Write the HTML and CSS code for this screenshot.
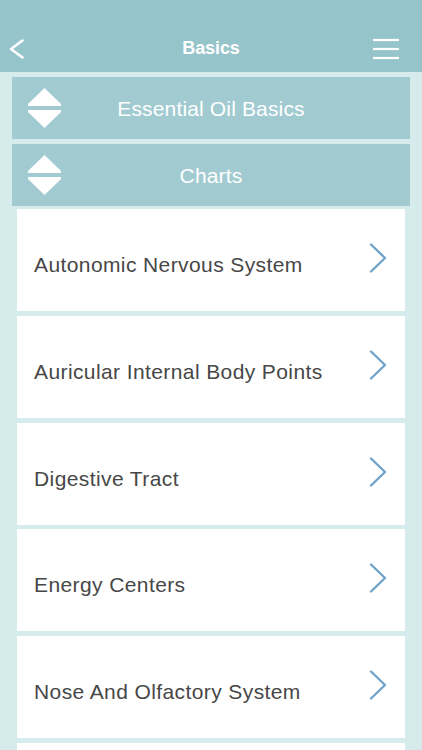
FILE: index.html
```html
<!DOCTYPE html>
<html lang="en">
<head>
<meta charset="utf-8">
<title>Basics</title>
<link rel="stylesheet" href="styles.css">
</head>
<body>
<header class="topbar">
  <div class="nav">
    <span class="nav-btn back">
      <svg width="16" height="20" viewBox="0 0 16 20"><polyline points="13.5,1.5 2,10 13.5,18.5" fill="none" stroke="#fff" stroke-width="2.6" stroke-linecap="round" stroke-linejoin="round"/></svg>
    </span>
    <h1 class="title">Basics</h1>
    <span class="nav-btn menu">
      <svg width="26" height="22" viewBox="0 0 26 22"><g stroke="#fff" stroke-width="2.2"><line x1="0" y1="2" x2="26" y2="2"/><line x1="0" y1="11" x2="26" y2="11"/><line x1="0" y1="20" x2="26" y2="20"/></g></svg>
    </span>
  </div>
</header>
<main class="content">
  <div class="section">
    <svg class="toggle" width="33" height="40" viewBox="0 0 33 40"><polygon points="0,16 16.5,0 33,16 33,18 0,18" fill="#fff"/><polygon points="0,22 33,22 33,24 16.5,40 0,24" fill="#fff"/></svg>
    <span class="section-label">Essential Oil Basics</span>
  </div>
  <div class="section">
    <svg class="toggle" width="33" height="40" viewBox="0 0 33 40"><polygon points="0,16 16.5,0 33,16 33,18 0,18" fill="#fff"/><polygon points="0,22 33,22 33,24 16.5,40 0,24" fill="#fff"/></svg>
    <span class="section-label">Charts</span>
  </div>
  <ul class="list">
    <li class="item"><span class="item-label">Autonomic Nervous System</span><svg class="chev" width="18" height="30" viewBox="0 0 18 30"><polyline points="2,1.5 16,15 2,28.5" fill="none" stroke="#6fa3c9" stroke-width="2.4" stroke-linecap="round" stroke-linejoin="round"/></svg></li>
    <li class="item"><span class="item-label">Auricular Internal Body Points</span><svg class="chev" width="18" height="30" viewBox="0 0 18 30"><polyline points="2,1.5 16,15 2,28.5" fill="none" stroke="#6fa3c9" stroke-width="2.4" stroke-linecap="round" stroke-linejoin="round"/></svg></li>
    <li class="item"><span class="item-label">Digestive Tract</span><svg class="chev" width="18" height="30" viewBox="0 0 18 30"><polyline points="2,1.5 16,15 2,28.5" fill="none" stroke="#6fa3c9" stroke-width="2.4" stroke-linecap="round" stroke-linejoin="round"/></svg></li>
    <li class="item"><span class="item-label">Energy Centers</span><svg class="chev" width="18" height="30" viewBox="0 0 18 30"><polyline points="2,1.5 16,15 2,28.5" fill="none" stroke="#6fa3c9" stroke-width="2.4" stroke-linecap="round" stroke-linejoin="round"/></svg></li>
    <li class="item"><span class="item-label">Nose And Olfactory System</span><svg class="chev" width="18" height="30" viewBox="0 0 18 30"><polyline points="2,1.5 16,15 2,28.5" fill="none" stroke="#6fa3c9" stroke-width="2.4" stroke-linecap="round" stroke-linejoin="round"/></svg></li>
    <li class="item"></li>
  </ul>
</main>
</body>
</html>
```
FILE: styles.css
```css
* { box-sizing: border-box; }
html, body {
  margin: 0;
  padding: 0;
}
body {
  background: #d6ebeb;
  font-family: "Liberation Sans", Arial, sans-serif;
  height: 750px;
  overflow: hidden;
}
.topbar {
  background: #96c4cb;
  height: 72px;
  padding-top: 28px;
}
.nav {
  height: 40px;
  display: grid;
  grid-template-columns: 1fr auto 1fr;
  align-items: center;
  padding: 0 23px;
}
.nav-btn {
  display: flex;
  align-items: center;
}
.nav-btn.back { margin-top: 2px; margin-left: -14px; }
.nav-btn.menu { justify-content: flex-end; margin-top: 2px; }
.title {
  margin: 0;
  color: #fff;
  font-size: 18px;
  font-weight: bold;
  letter-spacing: -0.1px;
  padding-top: 1px;
}
.content {
  padding: 5px 12px 0;
  display: flex;
  flex-direction: column;
}
.section {
  background: #a1cbd1;
  height: 62px;
  margin-bottom: 5px;
  display: flex;
  align-items: center;
  position: relative;
  justify-content: center;
}
.toggle {
  position: absolute;
  left: 16px;
  top: 11px;
}
.section-label {
  color: #fff;
  font-size: 21px;
  letter-spacing: 0.15px;
  padding-top: 1px;
}
.list {
  list-style: none;
  margin: -2px 5px 0;
  padding: 0;
  display: flex;
  flex-direction: column;
  gap: 4.8px;
}
.item {
  background: #fff;
  height: 102px;
  flex: none;
  display: flex;
  align-items: center;
  justify-content: space-between;
  padding: 0 18px 0 17px;
}
.item-label {
  color: #474747;
  font-size: 21px;
  letter-spacing: 0.4px;
  padding-top: 10px;
}
.chev {
  margin-top: -4px;
}
```
